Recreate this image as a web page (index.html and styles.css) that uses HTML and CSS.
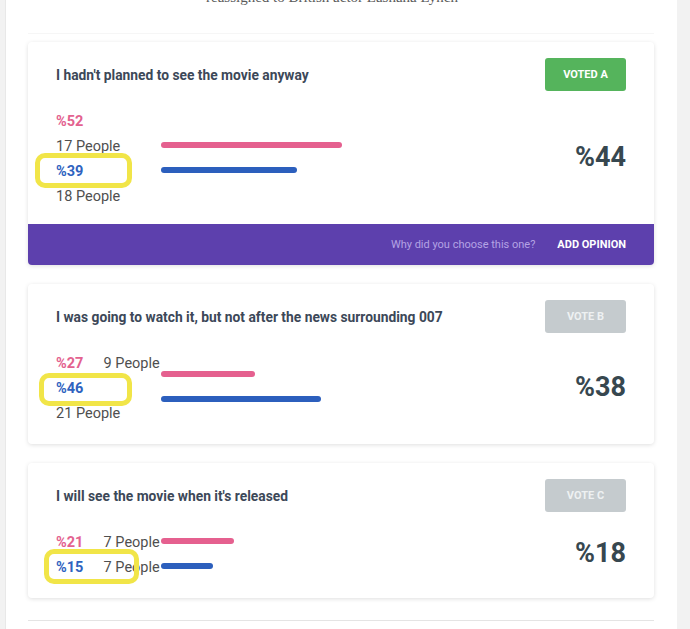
FILE: index.html
```html
<!DOCTYPE html>
<html lang="en">
<head>
  <meta charset="UTF-8">
  <meta name="viewport" content="width=device-width, initial-scale=1.0">
  <title>Poll results</title>
  <link rel="stylesheet" href="styles.css">
</head>
<body>

<div class="page">

  <!-- End of the article text -->
  <div class="intro">
    <p class="lead">reassigned to British actor Lashana Lynch</p>
  </div>

  <!-- Poll options -->
  <div class="polls">

    <div class="card">
      <div class="card-body with-foot">
        <div class="card-head">
          <h3>I hadn't planned to see the movie anyway</h3>
          <button class="vote voted">VOTED A</button>
        </div>
        <div class="results">
          <div class="counts">
            <div class="count"><span class="pct pink">%52</span> <span class="people">17 People</span></div>
            <div class="count"><span class="pct blue">%39</span> <span class="people">18 People</span></div>
            <span class="mark mark-a"></span>
          </div>
          <div class="bars">
            <div class="bar pink-bar" style="width: 52%;"></div>
            <div class="bar blue-bar" style="width: 39%;"></div>
          </div>
          <div class="total">%44</div>
        </div>
      </div>
      <div class="card-foot">
        <span class="ask">Why did you choose this one?</span>
        <span class="add">ADD OPINION</span>
      </div>
    </div>

    <div class="card">
      <div class="card-body">
        <div class="card-head">
          <h3>I was going to watch it, but not after the news surrounding 007</h3>
          <button class="vote">VOTE B</button>
        </div>
        <div class="results">
          <div class="counts">
            <div class="count"><span class="pct pink">%27</span> <span class="people">9 People</span></div>
            <div class="count"><span class="pct blue">%46</span> <span class="people">21 People</span></div>
            <span class="mark mark-b"></span>
          </div>
          <div class="bars">
            <div class="bar pink-bar" style="width: 27%;"></div>
            <div class="bar blue-bar" style="width: 46%;"></div>
          </div>
          <div class="total">%38</div>
        </div>
      </div>
    </div>

    <div class="card">
      <div class="card-body">
        <div class="card-head">
          <h3>I will see the movie when it's released</h3>
          <button class="vote">VOTE C</button>
        </div>
        <div class="results">
          <div class="counts">
            <div class="count"><span class="pct pink">%21</span> <span class="people">7 People</span></div>
            <div class="count"><span class="pct blue">%15</span> <span class="people">7 People</span></div>
            <span class="mark mark-c"></span>
          </div>
          <div class="bars">
            <div class="bar pink-bar" style="width: 21%;"></div>
            <div class="bar blue-bar" style="width: 15%;"></div>
          </div>
          <div class="total">%18</div>
        </div>
      </div>
    </div>

  </div>

  <div class="divider"></div>

</div>

</body>
</html>
```

FILE: styles.css
```css
* {
  box-sizing: border-box;
}
body {
  margin: 0;
  padding: 0;
  background-color: #f2f2f2;
  font-family: Roboto, 'Liberation Sans', sans-serif;
  color: #3c4858;
  overflow: hidden;
}

.page {
  display: flow-root;
  width: 672px;
  height: 629px;
  margin-left: 5px;
  padding: 0 23px 0 22px;
  background-color: white;
  border-left: 1px solid #e8e8e8;
}

.intro {
  margin-top: -11px;
  padding-bottom: 28px;
  border-bottom: 1px solid #f6f6f6;
}
.lead {
  margin: 0;
  padding-left: 178px;
  font-family: 'Liberation Serif', 'DejaVu Serif', serif;
  font-size: 15px;
  line-height: 16px;
  color: #5a5a5a;
}

.polls {
  display: flex;
  flex-direction: column;
  gap: 19px;
  padding-top: 8px;
}

.card {
  background-color: white;
  border-radius: 4px;
  box-shadow: 0 1px 4px rgba(0, 0, 0, 0.13);
}
.card-body {
  padding: 16px 28px 20px 28px;
}
.card-body.with-foot {
  padding-bottom: 17px;
}
.card-head {
  display: flex;
  justify-content: space-between;
  align-items: center;
}
.card-head h3 {
  margin: 0;
  font-size: 13.8px;
  font-weight: 700;
  color: #3c4858;
}

.vote {
  width: 81px;
  height: 33px;
  border: none;
  border-radius: 3px;
  background-color: #c5cbce;
  color: #eef1f2;
  font-family: Roboto, 'Liberation Sans', sans-serif;
  font-size: 11px;
  font-weight: 700;
}
.vote.voted {
  background-color: #55b45c;
  color: white;
}

.results {
  display: flex;
  align-items: center;
  margin-top: 16px;
}
.counts {
  position: relative;
  width: 105px;
  padding-top: 2px;
  margin-bottom: -2px;
  font-size: 14.5px;
  line-height: 25px;
}
.pct {
  display: inline-block;
  width: 44px;
  font-weight: 700;
}
.people {
  color: #4f4f4f;
  white-space: nowrap;
}
.pink {
  color: #e3628f;
}
.blue {
  color: #2f63bf;
}

.bars {
  display: flex;
  flex-direction: column;
  gap: 19px;
  width: 348px;
}
.bar {
  height: 6px;
  border-radius: 3px;
}
.pink-bar {
  background-color: #e5608f;
}
.blue-bar {
  background-color: #2c5fbd;
}

.total {
  margin-left: auto;
  font-size: 27px;
  font-weight: 700;
  color: #37474f;
}

.card-foot {
  display: flex;
  justify-content: flex-end;
  align-items: center;
  gap: 22px;
  height: 41px;
  padding-right: 28px;
  background-color: #5d40ad;
  border-radius: 0 0 4px 4px;
  font-size: 11px;
}
.ask {
  color: #b4a3e4;
}
.add {
  color: white;
  font-weight: 700;
}

/* yellow annotation boxes drawn over the screenshot */
.mark {
  position: absolute;
  border: 5px solid #f1e548;
  border-radius: 10px;
}
.mark-a {
  left: -21px;
  top: 46px;
  width: 97px;
  height: 35px;
}
.mark-b {
  left: -17px;
  top: 24px;
  width: 93px;
  height: 33px;
}
.mark-c {
  left: -12px;
  top: 21px;
  width: 95px;
  height: 35px;
}

.divider {
  margin-top: 22px;
  border-top: 1px solid #e4e4e4;
}
```
